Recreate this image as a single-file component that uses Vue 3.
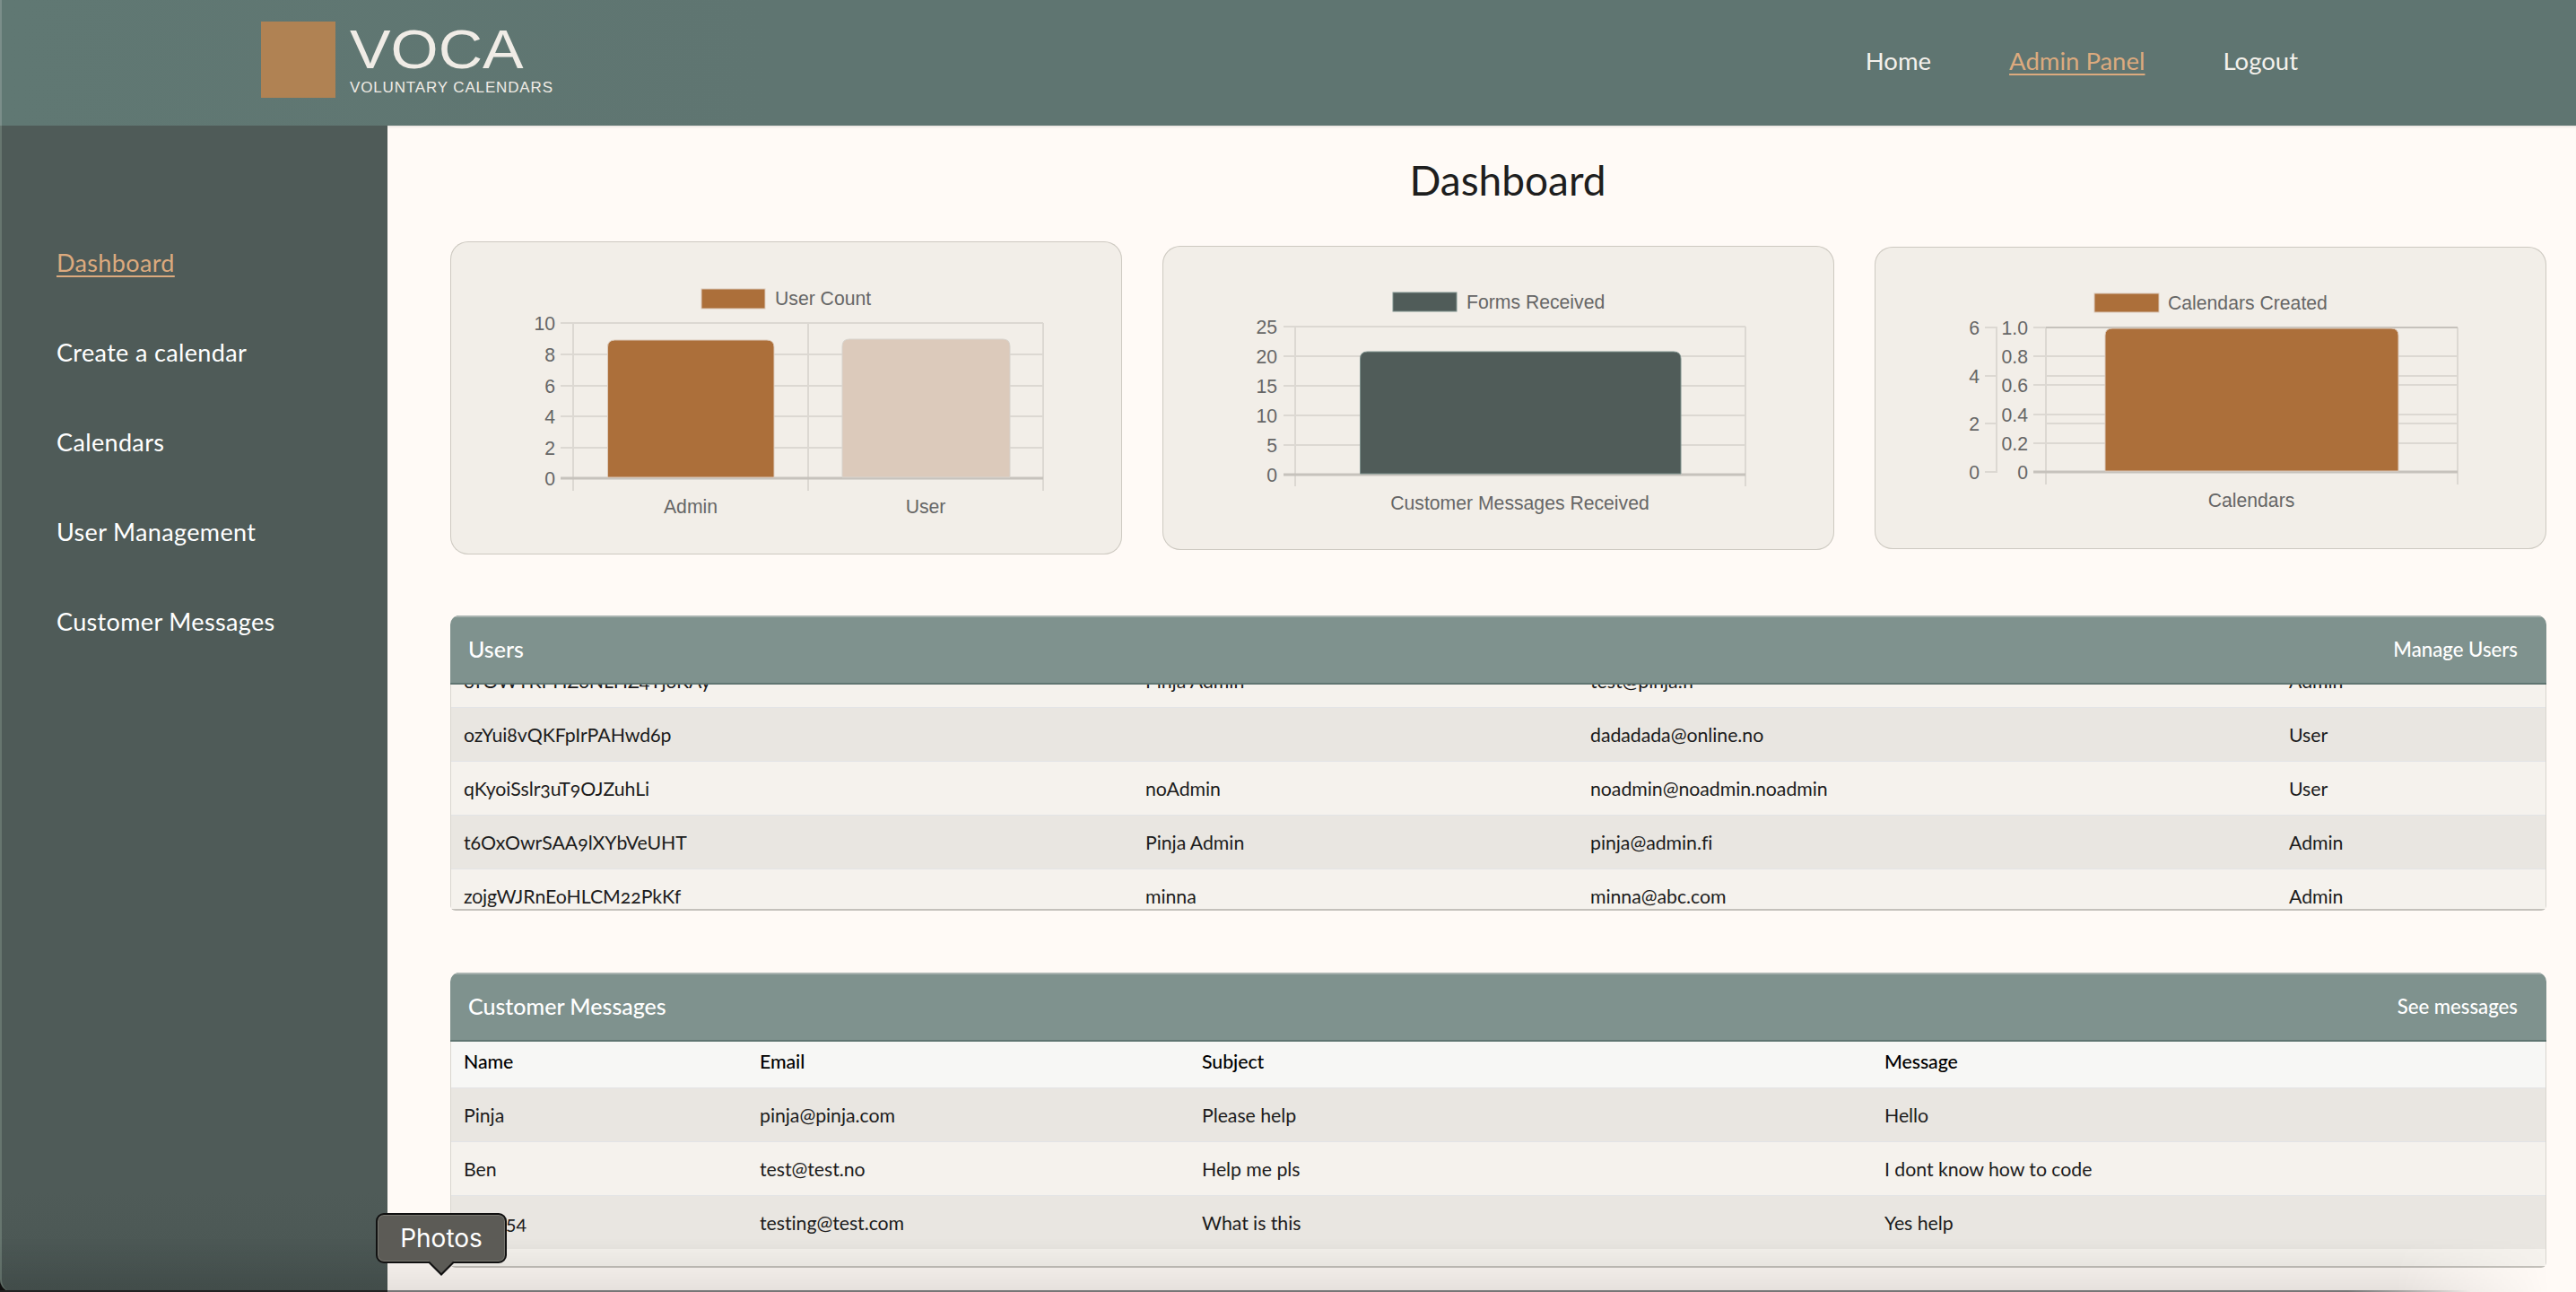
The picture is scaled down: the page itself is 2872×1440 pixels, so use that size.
<script setup>
const sideLinks = ['Dashboard', 'Create a calendar', 'Calendars', 'User Management', 'Customer Messages']
const topLinks = ['Home', 'Admin Panel', 'Logout']

const users = [
  ['oTOWTKPHZ6NLHZ4Yj6KAy', 'Pinja Admin', 'test@pinja.fi', 'Admin'],
  ['ozYui8vQKFpIrPAHwd6p', '', 'dadadada@online.no', 'User'],
  ['qKyoiSslr3uT9OJZuhLi', 'noAdmin', 'noadmin@noadmin.noadmin', 'User'],
  ['t6OxOwrSAA9lXYbVeUHT', 'Pinja Admin', 'pinja@admin.fi', 'Admin'],
  ['z0jgWJRnEoHLCM22PkKf', 'minna', 'minna@abc.com', 'Admin']
]
const messages = [
  ['Pinja', 'pinja@pinja.com', 'Please help', 'Hello'],
  ['Ben', 'test@test.no', 'Help me pls', 'I dont know how to code'],
  ['Tests54', 'testing@test.com', 'What is this', 'Yes help']
]

const barPath = (x1, x2, top, bottom, r = 8) =>
  `M${x1} ${bottom}V${top + r}Q${x1} ${top} ${x1 + r} ${top}H${x2 - r}Q${x2} ${top} ${x2} ${top + r}V${bottom}Z`
</script>

<template>
  <div class="page">
    <header class="topbar">
      <div class="brand">
        <div class="logo-mark"></div>
        <div class="logo-text">
          <div class="logo-name">VOCA</div>
          <div class="logo-sub">VOLUNTARY CALENDARS</div>
        </div>
      </div>
      <nav class="topnav">
        <a v-for="(l, i) in topLinks" :key="l" :class="{ active: i === 1 }">{{ l }}</a>
      </nav>
    </header>

    <div class="body">
      <aside class="sidebar">
        <a v-for="(l, i) in sideLinks" :key="l" :class="{ active: i === 0 }">{{ l }}</a>
      </aside>

      <main class="main">
        <h1 class="title">Dashboard</h1>

        <section class="charts">
          <div class="card">
            <svg class="chart" width="749" height="349" viewBox="502 269 749 349">
              <rect x="782" y="322" width="71" height="22" fill="#ac6f3a" stroke="#dccabb" />
              <text class="t" x="864" y="340">User Count</text>
              <g class="grid">
                <path d="M625 360H1163M625 395H1163M625 430H1163M625 464H1163M625 499H1163" />
                <path d="M639 360V547M901 360V547M1163 360V547" />
              </g>
              <path class="zero" d="M625 533H1163" />
              <path :d="barPath(677.5, 863, 379, 532)" fill="#ac6f3a" stroke="#dccabb" />
              <path :d="barPath(939, 1126, 378, 532)" fill="#dccabb" stroke="#d8d4ce" />
              <g class="t" text-anchor="end">
                <text x="619" y="368">10</text><text x="619" y="403">8</text><text x="619" y="438">6</text>
                <text x="619" y="472">4</text><text x="619" y="507">2</text><text x="619" y="541">0</text>
              </g>
              <g class="t" text-anchor="middle">
                <text x="770" y="572">Admin</text><text x="1032" y="572">User</text>
              </g>
            </svg>
          </div>

          <div class="card">
            <svg class="chart" width="749" height="339" viewBox="1296 274 749 339">
              <rect x="1553" y="326" width="71" height="21" fill="#505c59" stroke="#7f928e" />
              <text class="t" x="1635" y="344">Forms Received</text>
              <g class="grid">
                <path d="M1431 364H1946M1431 397H1946M1431 430H1946M1431 463H1946M1431 496H1946" />
                <path d="M1444 364V542M1946 364V542" />
              </g>
              <path class="zero" d="M1431 529H1946" />
              <path :d="barPath(1516.5, 1874, 392, 528)" fill="#505c59" stroke="#7f928e" />
              <g class="t" text-anchor="end">
                <text x="1424" y="372">25</text><text x="1424" y="405">20</text><text x="1424" y="438">15</text>
                <text x="1424" y="471">10</text><text x="1424" y="504">5</text><text x="1424" y="537">0</text>
              </g>
              <text class="t" text-anchor="middle" x="1694.5" y="568">Customer Messages Received</text>
            </svg>
          </div>

          <div class="card">
            <svg class="chart" width="749" height="337" viewBox="2090 276 749 337">
              <rect x="2335" y="328" width="72" height="21" fill="#ac6f3a" stroke="#dccabb" />
              <text class="t" x="2417" y="346">Calendars Created</text>
              <g class="grid">
                <path d="M2213 366H2226V527H2213M2213 420H2226M2213 473H2226" />
                <path d="M2267 366H2740M2267 398H2740M2267 430H2740M2267 463H2740M2267 495H2740M2281 420H2740M2281 473H2740" />
                <path d="M2281 366V541M2740 366V541" />
              </g>
              <path class="zero" d="M2267 527H2740" />
              <path class="zero thin" d="M2281 366H2740" />
              <path :d="barPath(2347, 2674, 367, 526)" fill="#ac6f3a" stroke="#dccabb" />
              <g class="t" text-anchor="end">
                <text x="2207" y="374">6</text><text x="2207" y="428">4</text><text x="2207" y="481">2</text><text x="2207" y="535">0</text>
                <text x="2261" y="374">1.0</text><text x="2261" y="406">0.8</text><text x="2261" y="438">0.6</text>
                <text x="2261" y="471">0.4</text><text x="2261" y="503">0.2</text><text x="2261" y="535">0</text>
              </g>
              <text class="t" text-anchor="middle" x="2510" y="566">Calendars</text>
            </svg>
          </div>
        </section>

        <section class="panel users">
          <div class="panel-head">
            <span class="panel-title">Users</span>
            <a class="panel-link">Manage Users</a>
          </div>
          <div class="panel-body">
            <div class="scrolled">
              <div v-for="u in users" :key="u[0]" class="row user-row">
                <span v-for="(c, i) in u" :key="i">{{ c }}</span>
              </div>
            </div>
          </div>
        </section>

        <section class="panel messages">
          <div class="panel-head">
            <span class="panel-title">Customer Messages</span>
            <a class="panel-link">See messages</a>
          </div>
          <div class="panel-body">
            <div class="row msg-row head-row">
              <span>Name</span><span>Email</span><span>Subject</span><span>Message</span>
            </div>
            <div v-for="m in messages" :key="m[0]" class="row msg-row">
              <span v-for="(c, i) in m" :key="i">{{ c }}</span>
            </div>
          </div>
        </section>
      </main>
    </div>

    <div class="dock-shade"></div>
    <div class="dock-line"></div>
    <div class="tooltip">Photos</div>
  </div>
</template>

<style>
html, body { margin: 0; padding: 0; background: #fffaf6; overflow: hidden; }
</style>

<style scoped>
.page {
  position: relative;
  width: 2872px;
  height: 1440px;
  overflow: hidden;
  display: flex;
  flex-direction: column;
  font-family: "Lato", "Open Sans", sans-serif;
  font-variant-numeric: oldstyle-nums;
  background: #fffaf6;
}
a { cursor: pointer; }

.topbar {
  height: 140px;
  flex: none;
  box-sizing: border-box;
  border-left: 2px solid #7b8e8a;
  background: linear-gradient(90deg, #607873 0, #5f7571 30%, #5f7571 100%);
  display: flex;
  align-items: center;
  justify-content: space-between;
  padding: 0 310px 0 289px;
}
.brand { display: flex; align-items: flex-start; gap: 16px; align-self: flex-start; margin-top: 24px; }
.logo-mark { width: 83px; height: 85px; background: #b08253; }
.logo-text { font-family: "Liberation Sans", Arial, sans-serif; color: #f0ece6; font-variant-numeric: normal; }
.logo-name { font-size: 61.5px; line-height: 62px; transform: scaleX(1.11); transform-origin: left center; }
.logo-sub { font-size: 17px; line-height: 20px; margin-top: 2px; letter-spacing: .85px; white-space: nowrap; }

.topnav { display: flex; gap: 87px; font-size: 27.5px; color: #f4f1ec; margin-top: -5px; }
.active { color: #dcaa7e; text-decoration: underline; text-underline-offset: 4px; text-decoration-thickness: 2px; }

.body {
  flex: 1;
  display: flex;
  min-height: 0;
  background: #111;
}
.sidebar {
  width: 432px;
  flex: none;
  box-sizing: border-box;
  border-left: 2px solid #67766f;
  border-bottom-left-radius: 14px;
  background: linear-gradient(180deg, #4f5b58 calc(100% - 110px), #495552 100%);
  color: #fff;
  padding: 136px 0 0 61px;
  display: flex;
  flex-direction: column;
  gap: 66px;
  font-size: 27px;
  line-height: 34px;
  letter-spacing: .35px;
}
.sidebar .active { color: #dcaa7e; }

.main {
  flex: 1;
  min-width: 0;
  box-sizing: border-box;
  padding: 0 33px 0 70px;
  background: #fffaf6;
  box-shadow: inset 0 3px 3px -2px rgba(0, 0, 0, .12);
}
.title {
  margin: 0;
  height: 129px;
  padding: 31px 0 0 21px;
  box-sizing: border-box;
  text-align: center;
  font-size: 46px;
  line-height: 60px;
  font-weight: 400;
  color: #1e1e1e;
}

.charts {
  display: grid;
  grid-template-columns: repeat(3, 749px);
  column-gap: 45px;
  align-items: center;
  height: 349px;
}
.card {
  position: relative;
  background: #f2eee8;
  border-radius: 20px;
  box-shadow: inset 0 0 0 1px #cdc9c1;
  overflow: hidden;
  line-height: 0;
}
.chart { display: block; }
.t { font-family: "Liberation Sans", Arial, sans-serif; font-size: 21.2px; fill: #666; font-variant-numeric: normal; }
.grid path { fill: none; stroke: #dcd8d2; stroke-width: 2; }
.zero { fill: none; stroke: #c6c2bc; stroke-width: 3; }
.zero.thin { stroke-width: 2; }

.panel {
  border-radius: 10px 10px 6px 6px;
  overflow: hidden;
  font-size: 21.3px;
  color: #1c1c1c;
}
.users { margin-top: 68px; height: 329px; }
.messages { margin-top: 69px; height: 329px; }
.panel-head {
  height: 77px;
  box-sizing: border-box;
  background: #7f928e;
  border-top: 2px solid #a9b3b0;
  border-bottom: 2px solid #5f7571;
  display: flex;
  align-items: center;
  justify-content: space-between;
  padding: 0 32px 3px 20px;
  color: #fff;
  font-weight: 500;
}
.panel-title { font-size: 25px; }
.panel-link { font-size: 22.2px; }
.panel-body {
  height: 252px;
  box-sizing: border-box;
  overflow: hidden;
  background: #f5f2ed;
  border-left: 1px solid #d8d5cf;
  border-right: 1px solid #d8d5cf;
  border-bottom: 2px solid #c4c1bb;
}
.scrolled { margin-top: -35px; }
.row {
  display: grid;
  height: 60px;
  box-sizing: border-box;
  align-items: center;
  border-top: 1px solid #e3e4e6;
  background: #f5f2ed;
  padding-left: 14px;
  letter-spacing: -.05px;
  white-space: nowrap;
}
.row:nth-child(even) { background: #e9e6e1; }
.user-row { grid-template-columns: 760px 496px 779px 1fr; }
.msg-row { grid-template-columns: 330px 493px 761px 1fr; }
.head-row { height: 51px; padding-bottom: 7px; background: #f7f7f5; color: #000; font-weight: 500; border-top: 0; }

.dock-shade {
  position: absolute;
  left: 0;
  right: 0;
  bottom: 0;
  height: 60px;
  background: linear-gradient(180deg, rgba(0, 0, 0, 0), rgba(0, 0, 0, .1));
  -webkit-mask-image: linear-gradient(90deg, #000 93%, transparent 99%);
  mask-image: linear-gradient(90deg, #000 93%, transparent 99%);
  pointer-events: none;
}
.dock-line {
  position: absolute;
  left: 0;
  bottom: 0;
  width: 2755px;
  height: 2px;
  background: linear-gradient(90deg, #222 432px, #777 432px, #777 95%, rgba(120, 120, 120, 0));
}
.tooltip {
  position: absolute;
  left: 419px;
  top: 1352px;
  width: 146px;
  height: 56px;
  box-sizing: border-box;
  border: 2px solid #111;
  border-radius: 9px;
  background: #5c5b56;
  box-shadow: inset 0 0 0 1px #77766f;
  color: #fff;
  font-family: "Inter", "Liberation Sans", sans-serif;
  font-size: 28px;
  display: flex;
  align-items: center;
  justify-content: center;
}
.tooltip::after {
  content: "";
  position: absolute;
  left: 55px;
  top: 100%;
  border: 16px solid transparent;
  border-top-color: #111;
  border-bottom: 0;
}
.tooltip::before {
  content: "";
  position: absolute;
  left: 57px;
  top: 100%;
  z-index: 1;
  margin-top: -1px;
  border: 14px solid transparent;
  border-top-color: #5c5b56;
  border-bottom: 0;
}
</style>
